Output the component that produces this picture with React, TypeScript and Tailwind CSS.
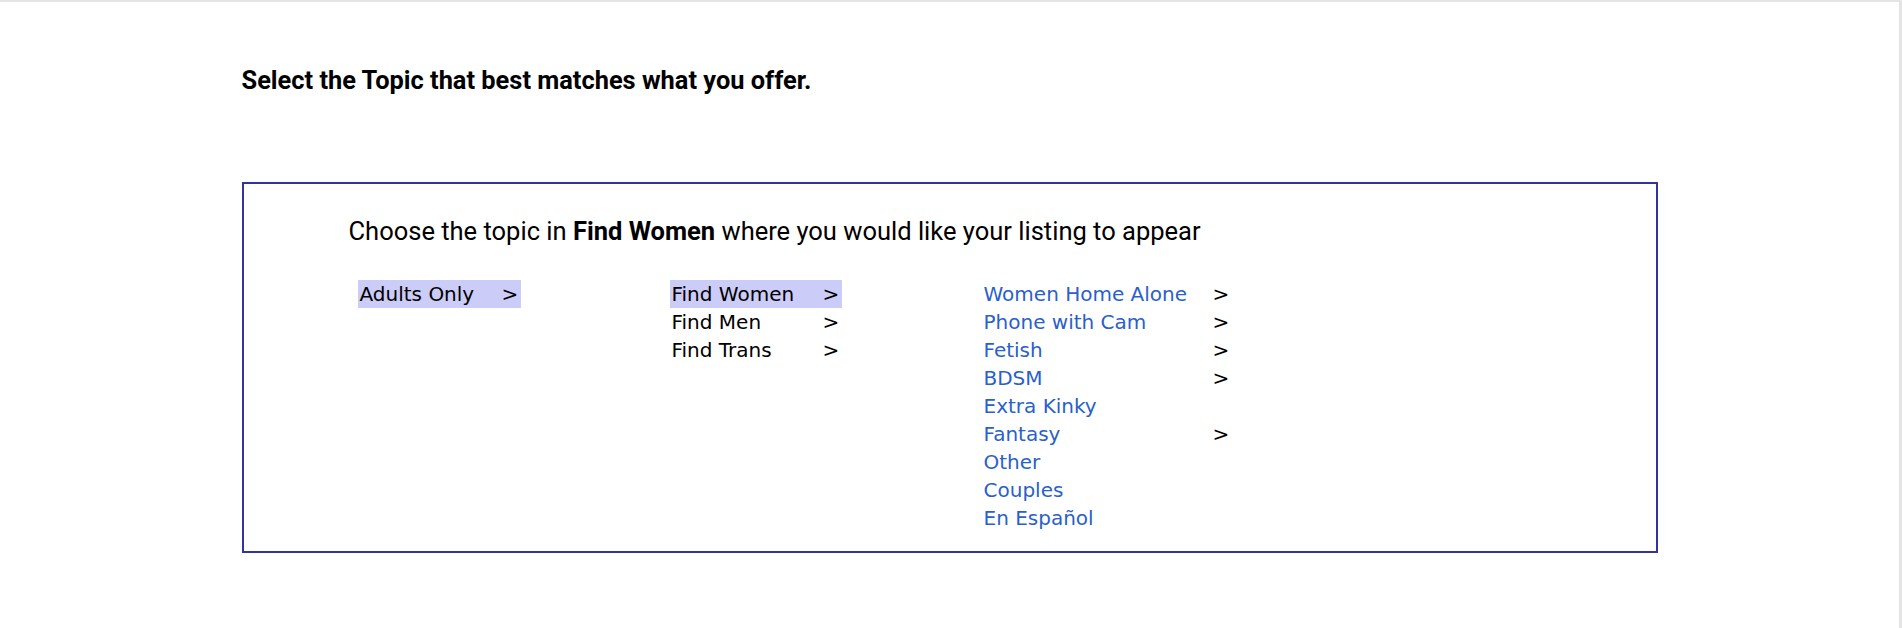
import React from 'react';

type Item = { label: string; arrow?: boolean; active?: boolean };

const level1: Item[] = [{ label: 'Adults Only', arrow: true, active: true }];

const level2: Item[] = [
  { label: 'Find Women', arrow: true, active: true },
  { label: 'Find Men', arrow: true },
  { label: 'Find Trans', arrow: true },
];

const level3: Item[] = [
  { label: 'Women Home Alone', arrow: true },
  { label: 'Phone with Cam', arrow: true },
  { label: 'Fetish', arrow: true },
  { label: 'BDSM', arrow: true },
  { label: 'Extra Kinky' },
  { label: 'Fantasy', arrow: true },
  { label: 'Other' },
  { label: 'Couples' },
  { label: 'En Español' },
];

function TopicColumn({ items, width, link }: { items: Item[]; width: string; link?: boolean }) {
  return (
    <ul className="w-[312px] flex flex-col">
      {items.map((item) => (
        <li
          key={item.label}
          className={`${width} h-[28px] flex items-center pl-[2px] ${item.active ? 'bg-[#ccccf8]' : ''}`}
        >
          <span className={`flex-1 ${link ? 'text-[#2a5fcc]' : 'text-black'}`}>{item.label}</span>
          <span className="w-[19px] text-black">{item.arrow ? '>' : ''}</span>
        </li>
      ))}
    </ul>
  );
}

export default function App() {
  return (
    <div className="min-h-screen bg-white border-t-2 border-r-[3px] border-[#e4e4e4] font-['Roboto',sans-serif]">
      <main className="w-[1416px] mx-auto pt-[54px]">
        <h1 className="text-[25.4px] font-bold text-black leading-[48px]">
          Select the Topic that best matches what you offer.
        </h1>

        <section className="mt-[78px] border-2 border-[#333399] pl-[105px] pt-[32px] pb-[19px]">
          <p className="text-[25.5px] text-black leading-[30px]">
            Choose the topic in <b className="font-bold">Find Women</b> where you would like your listing to appear
          </p>

          <div className="flex mt-[34px] pl-[9px] font-['DejaVu_Sans',Verdana,sans-serif] text-[20px]">
            <TopicColumn items={level1} width="w-[163px]" />
            <TopicColumn items={level2} width="w-[172px]" />
            <TopicColumn items={level3} width="w-[250px]" link />
          </div>
        </section>
      </main>
    </div>
  );
}
